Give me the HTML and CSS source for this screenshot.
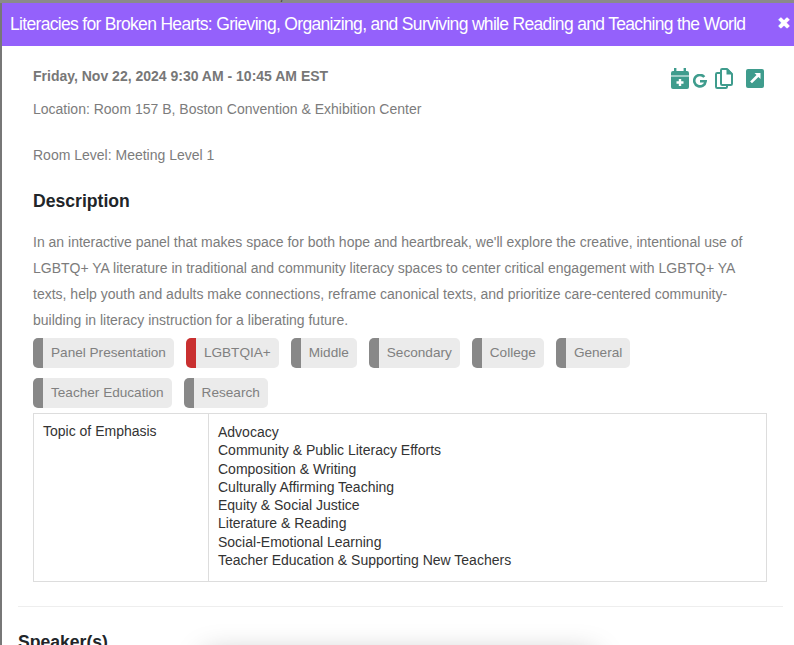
FILE: index.html
```html
<!DOCTYPE html>
<html lang="en">
<head>
<meta charset="utf-8">
<title>Session</title>
<link rel="stylesheet" href="styles.css">
</head>
<body>
<div class="backdrop"><span class="backdrop-text">Location: Room 157 B, Boston Convention &amp; Exhibition Center</span></div>
<div class="modal">
  <header class="modal-header">
    <h1 class="modal-title">Literacies for Broken Hearts: Grieving, Organizing, and Surviving while Reading and Teaching the World</h1>
    <span class="close">✖</span>
  </header>
  <main class="modal-body">
    <div class="meta-row">
      <div class="when">Friday, Nov 22, 2024 9:30 AM - 10:45 AM EST</div>
      <div class="actions">
        <svg class="icon" width="18" height="21" viewBox="0 0 18 21"><path fill="#3f9c8d" d="M3 0h2.400v3H12.600V0H15v3h1a2 2 0 0 1 2 2v2.500H0V5a2 2 0 0 1 2-2h1zM0 8.500h18V19a2 2 0 0 1-2 2H2a2 2 0 0 1-2-2z"/><path fill="#fff" d="M7.800 11h2.400v2.300h2.300v2.400h-2.300V18H7.800v-2.300H5.500v-2.400h2.300z"/></svg>
        <svg class="icon g" width="14" height="14" viewBox="0 0 14 14"><path fill="none" stroke="#3f9c8d" stroke-width="2.600" d="M11.300 3A5.700 5.700 0 1 0 12.600 7.300H7"/></svg>
        <svg class="icon copy" width="18" height="21" viewBox="0 0 18 21"><path fill="none" stroke="#3f9c8d" stroke-width="2" stroke-linejoin="round" d="M6 5V2.200A1.200 1.200 0 0 1 7.200 1H12l5 5v9.800a1.200 1.200 0 0 1-1.200 1.200H7.200A1.200 1.200 0 0 1 6 15.800V5H2.200A1.200 1.200 0 0 0 1 6.200v12.600A1.200 1.200 0 0 0 2.200 20h8.600a1.200 1.200 0 0 0 1.200-1.200V17"/><path fill="#3f9c8d" d="M11.500 1h1.500l4 4v1.500h-5.500z"/></svg>
        <svg class="icon share" width="18" height="19" viewBox="0 0 18 19"><rect width="18" height="19" rx="2" fill="#3f9c8d"/><path fill="#fff" d="M8.500 4h6v6l-2.100-2.100-6.400 6.400-1.900-1.900 6.400-6.400z"/></svg>
      </div>
    </div>
    <p class="line">Location: Room 157 B, Boston Convention &amp; Exhibition Center</p>
    <p class="line level">Room Level: Meeting Level 1</p>
    <h2 class="section-title">Description</h2>
    <p class="description">In an interactive panel that makes space for both hope and heartbreak, we'll explore the creative, intentional use of LGBTQ+ YA literature in traditional and community literacy spaces to center critical engagement with LGBTQ+ YA texts, help youth and adults make connections, reframe canonical texts, and prioritize care-centered community-building in literacy instruction for a liberating future.</p>
    <div class="tags">
      <span class="tag">Panel Presentation</span>
      <span class="tag tag-red">LGBTQIA+</span>
      <span class="tag">Middle</span>
      <span class="tag">Secondary</span>
      <span class="tag">College</span>
      <span class="tag">General</span>
      <span class="tag">Teacher Education</span>
      <span class="tag">Research</span>
    </div>
    <table class="topics">
      <tr>
        <td class="topic-label">Topic of Emphasis</td>
        <td class="topic-list">Advocacy<br>Community &amp; Public Literacy Efforts<br>Composition &amp; Writing<br>Culturally Affirming Teaching<br>Equity &amp; Social Justice<br>Literature &amp; Reading<br>Social-Emotional Learning<br>Teacher Education &amp; Supporting New Teachers</td>
      </tr>
    </table>
    <hr class="rule">
    <h2 class="section-title speakers">Speaker(s)</h2>
  </main>
</div>
<div class="fade-shadow"></div>
</body>
</html>
```
FILE: styles.css
```css
* { box-sizing: border-box; }
html, body { margin: 0; height: 100%; overflow: hidden; }
body { font-family: "Liberation Sans", Arial, sans-serif; background: #fff; position: relative; }
.backdrop { height: 3px; overflow: hidden; background: #8a8a8a; position: relative; }
.backdrop-text { display: block; margin: -13px 0 0 141px; font-size: 14px; line-height: 16px; color: #333; white-space: nowrap; }
.modal { border-left: 2px solid #777; height: 642px; overflow: hidden; }
.modal-header { height: 43px; background: #9461fb; display: flex; align-items: center; justify-content: space-between; padding: 0 3px 0 8px; }
.modal-title { margin: 0; font-size: 17.5px; font-weight: 400; color: #fff; letter-spacing: -.68px; white-space: nowrap; }
.close { color: #fff; font-size: 17px; font-family: "DejaVu Sans", sans-serif; margin-top: -4px; }
.modal-body { padding: 20px 11px 0 16px; }
.meta-row { display: flex; justify-content: space-between; margin-left: 15px; margin-right: 19px; height: 23px; }
.when { font-size: 14px; font-weight: 700; color: #777; padding-top: 2px; }
.actions { display: flex; align-items: flex-start; margin-top: 2px; }
.icon { display: block; }
.g { margin: 6px 0 0 4px; }
.copy { margin-left: 8px; }
.share { margin: 1px 0 0 13px; }
.line { margin: 10px 0 0 15px; font-size: 14px; line-height: 20px; color: #7c7c7c; }
.level { margin-top: 26px; }
.section-title { margin: 25px 0 0 15px; font-size: 17.6px; line-height: 22px; font-weight: 700; color: #212529; }
.description { margin: 17px 22px 0 15px; font-size: 14px; line-height: 26px; color: #7c7c7c; }
.tags { display: flex; flex-wrap: wrap; gap: 10px 12px; margin: 5px 16px 0 15px; }
.tag { height: 30px; line-height: 30px; background: #ebebeb; border-left: 10px solid #888; border-radius: 5px; padding: 0 8px; font-size: 13.6px; color: #808080; }
.tag-red { border-left-color: #c93030; }
.topics { border-collapse: collapse; margin: 5px 0 0 15px; width: 734px; font-size: 14px; color: #333; }
.topics td { border: 1px solid #ddd; vertical-align: top; padding: 8px 9px; line-height: 18.300px; }
.topic-label { width: 175px; }
.topics .topic-list { padding-top: 9px; padding-bottom: 12px; }
.rule { border: 0; border-top: 1px solid #eee; margin: 24px 0 0; }
.speakers { margin: 24px 0 0; }
.fade-shadow { position: absolute; left: 215px; top: 665px; width: 370px; height: 30px; box-shadow: 0 0 30px 10px rgba(0,0,0,.28); background: rgba(0,0,0,.28); }
```
